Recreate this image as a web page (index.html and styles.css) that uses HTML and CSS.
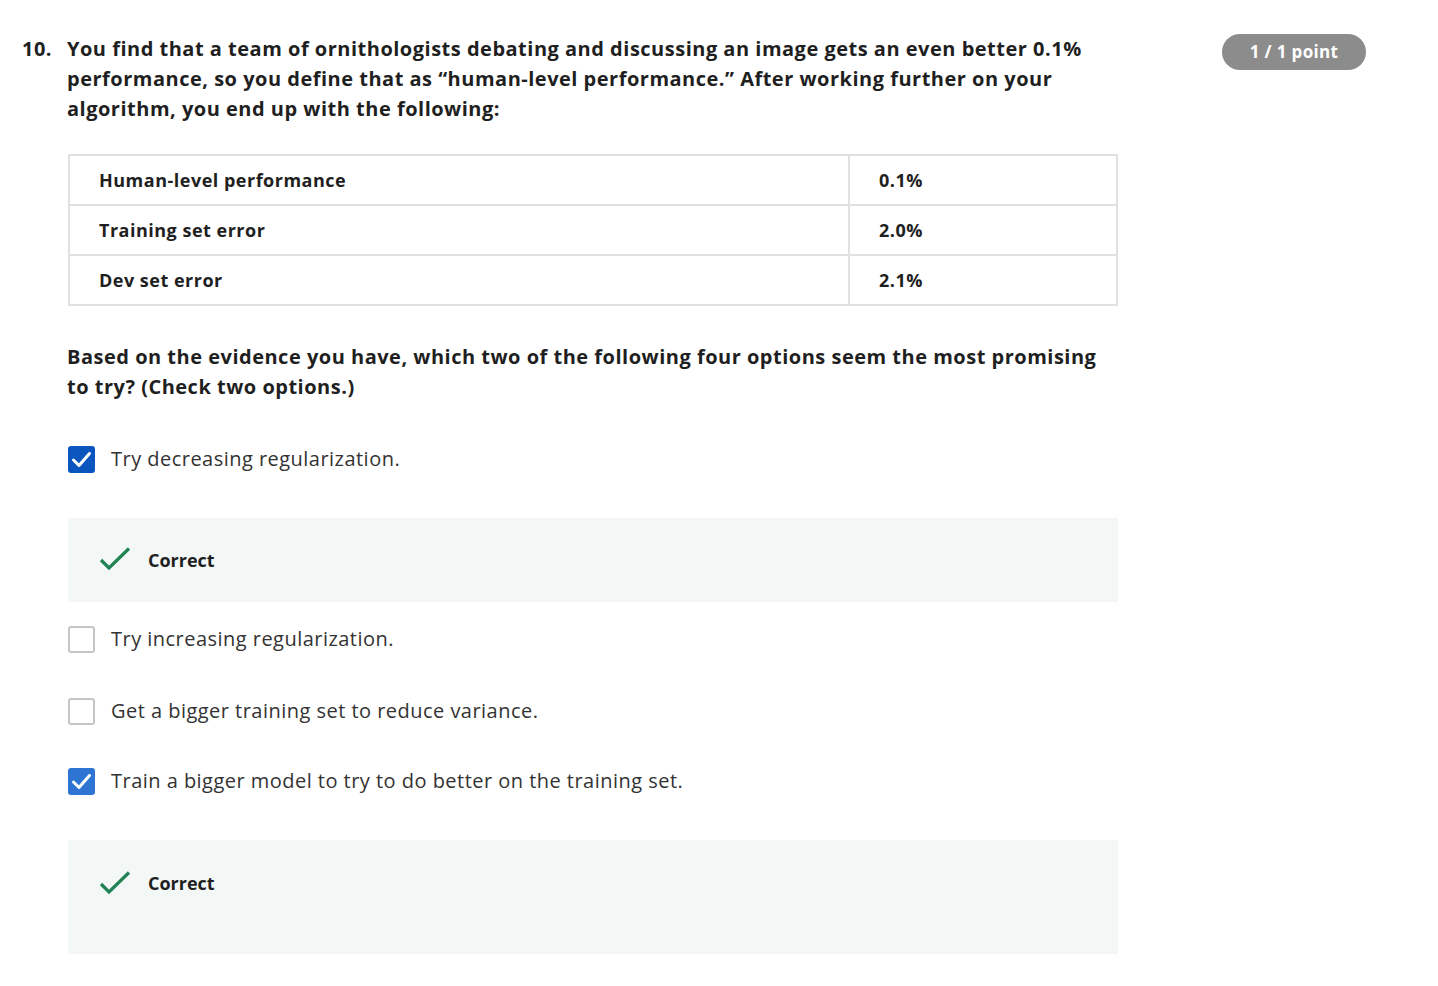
FILE: index.html
```html
<!DOCTYPE html>
<html lang="en">
<head>
<meta charset="utf-8">
<title>Quiz question 10</title>
<link rel="stylesheet" href="styles.css">
</head>
<body>
<div class="question">
  <div class="qnum">10.</div>
  <div class="qbody">
    <p class="prompt">You find that a team of ornithologists debating and discussing an image gets an even better 0.1% performance, so you define that as “human-level performance.” After working further on your algorithm, you end up with the following:</p>
    <table class="data">
      <tr><td class="label">Human-level performance</td><td class="val">0.1%</td></tr>
      <tr><td class="label">Training set error</td><td class="val">2.0%</td></tr>
      <tr><td class="label">Dev set error</td><td class="val">2.1%</td></tr>
    </table>
    <p class="prompt prompt2">Based on the evidence you have, which two of the following four options seem the most promising to try? (Check two options.)</p>

    <div class="option first">
      <span class="box checked dark"><svg viewBox="0 0 27 27" width="27" height="27"><polyline points="5.5,14 11,19.5 21.5,7.5" fill="none" stroke="#fff" stroke-width="3" stroke-linecap="round" stroke-linejoin="round"/></svg></span>
      <span class="otext">Try decreasing regularization.</span>
    </div>
    <div class="feedback">
      <svg class="tick" viewBox="0 0 34 26" width="34" height="26"><polyline points="2,13 10,21 30,1.5" fill="none" stroke="#1f8354" stroke-width="3.2"/></svg>
      <span class="ftext">Correct</span>
    </div>

    <div class="option after-fb">
      <span class="box"></span>
      <span class="otext">Try increasing regularization.</span>
    </div>
    <div class="option">
      <span class="box"></span>
      <span class="otext">Get a bigger training set to reduce variance.</span>
    </div>
    <div class="option last">
      <span class="box checked light"><svg viewBox="0 0 27 27" width="27" height="27"><polyline points="5.5,14 11,19.5 21.5,7.5" fill="none" stroke="#fff" stroke-width="3" stroke-linecap="round" stroke-linejoin="round"/></svg></span>
      <span class="otext">Train a bigger model to try to do better on the training set.</span>
    </div>
    <div class="feedback tall">
      <svg class="tick" viewBox="0 0 34 26" width="34" height="26"><polyline points="2,13 10,21 30,1.5" fill="none" stroke="#1f8354" stroke-width="3.2"/></svg>
      <span class="ftext">Correct</span>
    </div>
  </div>
  <div class="badge">1 / 1 point</div>
</div>
</body>
</html>
```

FILE: styles.css
```css
html, body {
  margin: 0;
  padding: 0;
  background: #ffffff;
}
body {
  font-family: "Open Sans", "Liberation Sans", sans-serif;
  color: #1f1f1f;
}
.question {
  display: flex;
  align-items: flex-start;
  padding: 34px 72px 32px 22px;
}
.qnum {
  width: 45px;
  flex: none;
  font-size: 20px;
  font-weight: 700;
  line-height: 30px;
  letter-spacing: 0.45px;
}
.qbody {
  width: 1051px;
  flex: none;
}
.prompt {
  margin: 0;
  font-size: 20px;
  font-weight: 700;
  line-height: 30px;
  letter-spacing: 0.5px;
}
.prompt2 {
  margin-top: 36px;
}
.data {
  margin-top: 30px;
  margin-left: 1px;
  width: 1050px;
  border-collapse: collapse;
  border: 2px solid #e1e1e1;
}
.data td {
  border: 2px solid #e1e1e1;
  height: 47px;
  padding: 0 0 1px 29px;
  font-size: 18px;
  font-weight: 700;
  letter-spacing: 0.5px;
  color: #1f1f1f;
}
.data td.label {
  width: 749px;
}
.option {
  display: flex;
  align-items: center;
  margin-top: 42px;
  height: 30px;
}
.option.after-fb {
  margin-top: 22px;
}
.option.last {
  margin-top: 40px;
}
.box {
  flex: none;
  width: 27px;
  height: 27px;
  box-sizing: border-box;
  margin-left: 1px;
  margin-right: 16px;
  border: 2px solid #c6c6c6;
  border-radius: 3px;
  background: #fff;
  display: flex;
}
.box.checked {
  border: none;
}
.box.dark {
  background: #0b56be;
}
.box.light {
  background: #2e74d2;
}
.otext {
  font-size: 20px;
  line-height: 30px;
  letter-spacing: 0.47px;
  color: #333333;
}
.feedback {
  margin-top: 44px;
  margin-left: 1px;
  background: #f3f8f6;
  height: 84px;
  box-sizing: border-box;
  padding: 0 0 0 31px;
  display: flex;
  align-items: center;
}
.feedback.tall {
  height: 114px;
  align-items: flex-start;
  padding-top: 31px;
}
.tick {
  flex: none;
  margin-right: 15px;
  margin-top: -1px;
}
.ftext {
  font-size: 18px;
  font-weight: 700;
  line-height: 24px;
  color: #1f1f1f;
}
.feedback.tall .tick {
  margin-top: 0;
}
.badge {
  margin-left: auto;
  flex: none;
  width: 144px;
  height: 36px;
  border-radius: 18px;
  background: #8c8c8c;
  color: #ffffff;
  font-size: 17px;
  font-weight: 700;
  line-height: 36px;
  letter-spacing: 0.36px;
  text-align: center;
}
```
